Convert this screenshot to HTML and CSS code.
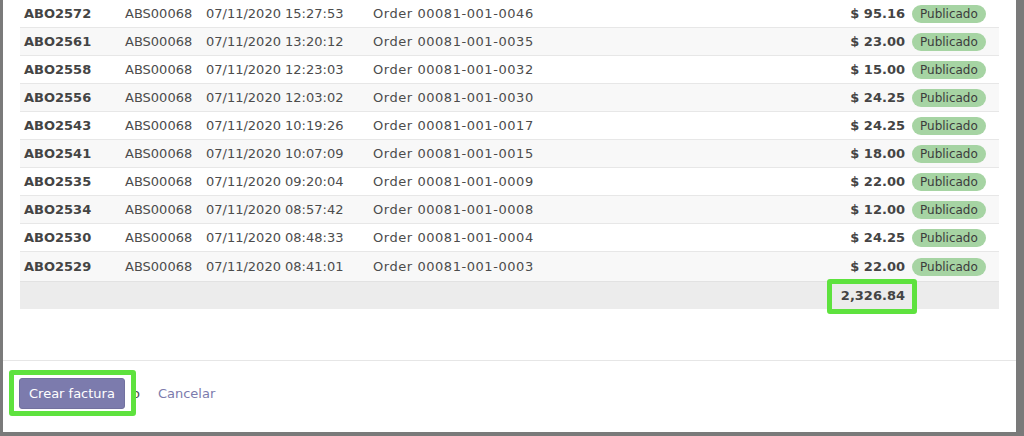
FILE: index.html
```html
<!DOCTYPE html>
<html lang="es">
<head>
<meta charset="utf-8">
<link rel="stylesheet" href="styles.css">
</head>
<body>
<div class="modal">
  <div class="modal-body">
    <table class="lines">
      <colgroup>
        <col class="c-ref"><col class="c-journal"><col class="c-date"><col class="c-name"><col class="c-amount"><col class="c-state">
      </colgroup>
      <tbody>
        <tr><td class="ref">ABO2572</td><td>ABS00068</td><td>07/11/2020 15:27:53</td><td class="name">Order 00081-001-0046</td><td class="amount">$ 95.16</td><td class="state"><span class="badge">Publicado</span></td></tr>
        <tr><td class="ref">ABO2561</td><td>ABS00068</td><td>07/11/2020 13:20:12</td><td class="name">Order 00081-001-0035</td><td class="amount">$ 23.00</td><td class="state"><span class="badge">Publicado</span></td></tr>
        <tr><td class="ref">ABO2558</td><td>ABS00068</td><td>07/11/2020 12:23:03</td><td class="name">Order 00081-001-0032</td><td class="amount">$ 15.00</td><td class="state"><span class="badge">Publicado</span></td></tr>
        <tr><td class="ref">ABO2556</td><td>ABS00068</td><td>07/11/2020 12:03:02</td><td class="name">Order 00081-001-0030</td><td class="amount">$ 24.25</td><td class="state"><span class="badge">Publicado</span></td></tr>
        <tr><td class="ref">ABO2543</td><td>ABS00068</td><td>07/11/2020 10:19:26</td><td class="name">Order 00081-001-0017</td><td class="amount">$ 24.25</td><td class="state"><span class="badge">Publicado</span></td></tr>
        <tr><td class="ref">ABO2541</td><td>ABS00068</td><td>07/11/2020 10:07:09</td><td class="name">Order 00081-001-0015</td><td class="amount">$ 18.00</td><td class="state"><span class="badge">Publicado</span></td></tr>
        <tr><td class="ref">ABO2535</td><td>ABS00068</td><td>07/11/2020 09:20:04</td><td class="name">Order 00081-001-0009</td><td class="amount">$ 22.00</td><td class="state"><span class="badge">Publicado</span></td></tr>
        <tr><td class="ref">ABO2534</td><td>ABS00068</td><td>07/11/2020 08:57:42</td><td class="name">Order 00081-001-0008</td><td class="amount">$ 12.00</td><td class="state"><span class="badge">Publicado</span></td></tr>
        <tr><td class="ref">ABO2530</td><td>ABS00068</td><td>07/11/2020 08:48:33</td><td class="name">Order 00081-001-0004</td><td class="amount">$ 24.25</td><td class="state"><span class="badge">Publicado</span></td></tr>
        <tr><td class="ref">ABO2529</td><td>ABS00068</td><td>07/11/2020 08:41:01</td><td class="name">Order 00081-001-0003</td><td class="amount">$ 22.00</td><td class="state"><span class="badge">Publicado</span></td></tr>
      </tbody>
      <tfoot>
        <tr><td></td><td></td><td></td><td></td><td class="amount total"><span class="total-wrap">2,326.84<span class="mark mark-total"></span></span></td><td></td></tr>
      </tfoot>
    </table>
  </div>
  <div class="modal-footer">
    <span class="btn-wrap"><button class="btn-primary">Crear factura</button><span class="mark mark-btn"></span></span>
    <span class="or">o</span>
    <a class="cancel" href="#">Cancelar</a>
  </div>
</div>
</body>
</html>
```
FILE: styles.css
```css
html, body {
  margin: 0;
  padding: 0;
  background: #7a7a7a;
  height: 436px;
  overflow: hidden;
}
.modal {
  margin-left: 3px;
  width: 1013px;
  height: 432px;
  background: #ffffff;
  font-family: "DejaVu Sans", sans-serif;
  font-size: 13px;
  color: #4c4c4c;
  display: flex;
  flex-direction: column;
}
.modal-body {
  padding: 0 17px 0 17px;
  height: 360px;
  box-sizing: border-box;
  overflow: hidden;
}
.lines {
  width: 100%;
  border-collapse: collapse;
  table-layout: fixed;
  margin-top: -1px;
}
.c-ref { width: 101px; }
.c-journal { width: 81px; }
.c-date { width: 167px; }
.c-amount { width: 120px; }
.c-state { width: 90px; }
.lines td {
  height: 27px;
  padding: 0 4px;
  border-top: 1px solid #e7e7e7;
  white-space: nowrap;
  vertical-align: middle;
}
.lines tbody tr:last-child td { height: 29px; }
.lines tbody tr:nth-child(even) td { background: #f8f8f8; }
.lines td.ref { font-weight: bold; color: #444; }
.lines td.name { letter-spacing: 0.55px; }
.lines td.amount { text-align: right; font-weight: bold; color: #444; }
.lines td.state { padding-left: 3px; padding-right: 0; }
.badge {
  display: inline-block;
  height: 18px;
  line-height: 18px;
  padding: 0 8px;
  border-radius: 9px;
  background: #a6d4a3;
  color: #3c3c3c;
  font-size: 12px;
}
.lines tfoot td {
  background: #ececec;
  border-top: 1px solid #e2e2e2;
}
.total-wrap {
  position: relative;
  display: inline-block;
}
.mark {
  position: absolute;
  border: 5px solid #5ee23e;
  border-radius: 3px;
  box-sizing: border-box;
  pointer-events: none;
}
.mark-total {
  right: -12px;
  width: 90px;
  top: -9px;
  height: 35px;
}
.modal-footer {
  border-top: 1px solid #e6e6e6;
  padding: 17px 16px 0 16px;
  display: flex;
  height: 71px;
  box-sizing: border-box;
  align-items: flex-start;
}
.btn-wrap {
  position: relative;
  display: inline-block;
}
.btn-primary {
  display: block;
  font-family: "DejaVu Sans", sans-serif;
  font-size: 13px;
  color: #ffffff;
  background: #7c7bad;
  border: 1px solid #72719f;
  border-radius: 3px;
  padding: 0 9px;
  height: 31px;
  white-space: nowrap;
}
.mark-btn {
  left: -10px;
  right: -11px;
  top: -8px;
  bottom: -7px;
}
.or {
  line-height: 31px;
  margin-left: 7px;
  color: #4c4c4c;
}
.cancel {
  line-height: 31px;
  margin-left: 18px;
  color: #7c7bad;
  text-decoration: none;
}
```
